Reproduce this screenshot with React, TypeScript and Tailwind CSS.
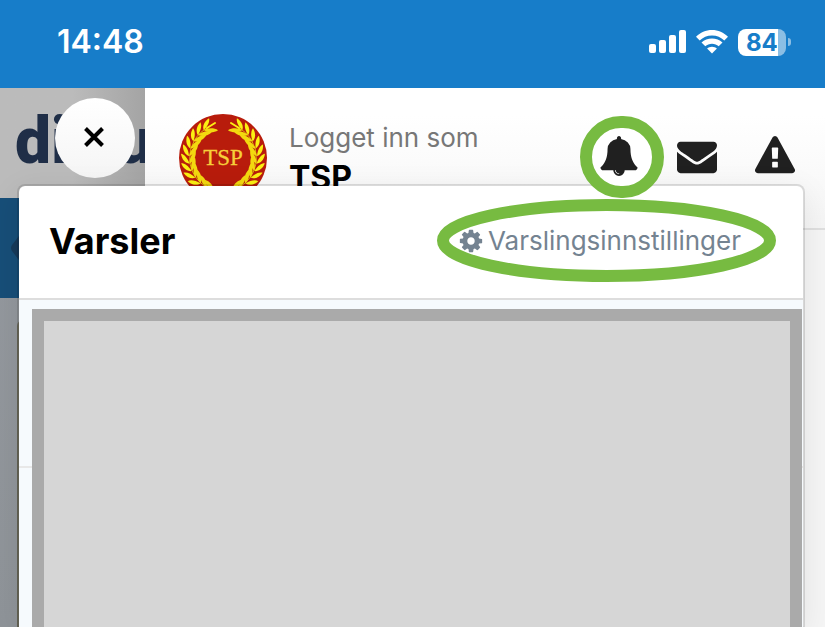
import React from 'react';

const icons = {
  bell: 'M912 1696q0-16-16-16-59 0-101.500-42.500t-42.500-101.500q0-16-16-16t-16 16q0 73 51.500 124.500t124.500 51.500q16 0 16-16zm816-288q0 52-38 90t-90 38h-448q0 106-75 181t-181 75-181-75-75-181h-448q-52 0-90-38t-38-90q50-42 91-88t85-119.500 74.500-158.500 50-206 19.500-260q0-152 117-282.500t307-158.500q-8-19-8-39 0-40 28-68t68-28 68 28 28 68q0 20-8 39 190 28 307 158.500t117 282.500q0 139 19.500 260t50 206 74.500 158.500 85 119.500 91 88z',
  envelope: 'M1792 710v794q0 66-47 113t-113 47h-1472q-66 0-113-47t-47-113v-794q44 49 101 87 362 246 497 345 57 42 92.500 65.500t94.500 48 110 24.500h2q51 0 110-24.500t94.500-48 92.500-65.500q170-123 498-345 57-39 100-87zm0-294q0 79-49 151t-122 123q-376 261-468 325-10 7-42.500 31t-54 38.500-52 32.500-57.500 27-50 9h-2q-23 0-50-9t-57.500-27-52-32.500-54-38.500-42.500-31q-91-64-262-182.500t-205-142.500q-62-42-117-115.500t-55-136.500q0-78 41.500-130t118.500-52h1472q65 0 112.500 47t47.500 113z',
  warning: 'M1024 1375v-190q0-14-9.500-23.500t-22.500-9.500h-192q-13 0-22.500 9.500t-9.500 23.500v190q0 14 9.500 23.500t22.500 9.500h192q13 0 22.500-9.500t9.500-23.500zm-2-374l18-459q0-12-10-19-13-11-24-11h-220q-11 0-24 11-10 7-10 21l17 457q0 10 10 16.500t24 6.500h185q14 0 23.500-6.500t10.500-16.500zm-14-934l768 1408q35 63-2 126-17 29-46.500 46t-63.500 17h-1536q-34 0-63.500-17t-46.500-46q-37-63-2-126l768-1408q17-31 47-49t65-18 65 18 47 49z',
  cog: 'M1152 896q0-106-75-181t-181-75-181 75-75 181 75 181 181 75 181-75 75-181zm512-109v222q0 12-8 23t-20 13l-185 28q-19 54-39 91 35 50 107 138 10 12 10 25t-9 23q-27 37-99 108t-94 71q-12 0-26-9l-138-108q-44 23-91 38-16 136-29 186-7 28-36 28h-222q-14 0-24.500-8.500t-11.500-21.500l-28-184q-49-16-90-37l-141 107q-10 9-25 9-14 0-25-11-126-114-165-168-7-10-7-23 0-12 8-23 15-21 51-66.500t54-70.500q-27-50-41-99l-183-27q-13-2-21-12.500t-8-23.500v-222q0-12 8-23t19-13l186-28q14-46 39-92-40-57-107-138-10-12-10-24 0-10 9-23 26-36 98.500-107.500t94.500-71.500q13 0 26 10l138 107q44-23 91-38 16-136 29-186 7-28 36-28h222q14 0 24.500 8.500t11.500 21.500l28 184q49 16 90 37l142-107q9-9 24-9 13 0 25 10 129 119 165 170 7 8 7 22 0 12-8 23-15 21-51 66.500t-54 70.500q26 50 41 98l183 28q13 2 21 12.500t8 23.500z',
};

const Icon: React.FC<{ name: keyof typeof icons; className: string }> = ({ name, className }) => (
  <svg viewBox="0 0 1792 1792" fill="currentColor" className={className} aria-hidden="true">
    <path d={icons[name]} />
  </svg>
);

const leafAngles = [33, 46, 59, 72, 85, 98, 111, 124, 137, 150, 163];

const Branch: React.FC = () => (
  <g>
    <path d="M58 13A34 34 0 0 1 54 76" stroke="#d9b010" strokeWidth="1" fill="none" />
    {leafAngles.map(angle => (
      <g key={angle} transform={`rotate(${angle} 44 44) translate(44 10)`}>
        <path d="M1 0C0 -4 -4 -7 -10 -7C-9 -4 -5 -1 1 0Z" fill="#fbf012" />
        <path d="M1 0C-2 0 -9 3 -11 8C-6 8 -1 5 1 0Z" fill="#f3d90f" />
      </g>
    ))}
    <path d="M60 14L52 9" stroke="#fbf012" strokeWidth="2" strokeLinecap="round" fill="none" />
  </g>
);

const Avatar: React.FC = () => (
  <svg viewBox="0 0 88 88" className="h-[88px] w-[88px] shrink-0" role="img" aria-label="TSP">
    <circle cx="44" cy="44" r="44" fill="#b81c0c" />
    <Branch />
    <g transform="translate(88 0) scale(-1 1)">
      <Branch />
    </g>
    <text x="44" y="51" textAnchor="middle" fontSize="23" fontFamily="Liberation Serif, serif" fill="#f6cf3a" stroke="#f6cf3a" strokeWidth="0.3">
      TSP
    </text>
  </svg>
);

const StatusBar: React.FC = () => (
  <div className="flex h-[88px] items-center justify-between bg-[#177dc9] pr-[34px] pb-1 pl-[57px] text-white">
    <span className="text-[32px] leading-10 font-semibold">14:48</span>
    <div className="flex items-center gap-[10px]">
      <svg viewBox="0 0 37 24" className="h-6 w-[37px]" fill="currentColor" aria-hidden="true">
        <rect x="0" y="14" width="7" height="9" rx="2" />
        <rect x="10" y="10" width="7" height="13" rx="2" />
        <rect x="20" y="5" width="7" height="18" rx="2" />
        <rect x="30" y="0" width="7" height="23" rx="2" />
      </svg>
      <svg viewBox="0 0 32 24" className="h-6 w-8" fill="currentColor" aria-hidden="true">
        <path d="M16 0C9.800 0 4.200 2.600 0 6.700L3.700 10.500C6.900 7.400 11.200 5.500 16 5.500S25.100 7.400 28.300 10.500L32 6.700C27.800 2.600 22.200 0 16 0Z" />
        <path d="M16 8.400C12 8.400 8.300 9.900 5.500 12.500L9.300 16.300C11.100 14.700 13.400 13.800 16 13.800S20.900 14.700 22.700 16.300L26.500 12.500C23.700 9.900 20 8.400 16 8.400Z" />
        <path d="M16 16.800C14.100 16.800 12.400 17.500 11.100 18.600L16 23.600L20.900 18.600C19.600 17.500 17.900 16.800 16 16.800Z" />
      </svg>
      <div className="flex items-center gap-[2px]">
        <div className="flex h-[27px] w-12 items-center rounded-lg bg-linear-to-r from-white from-84% to-[#8bbee4] to-84% pl-2">
          <span className="text-[24px] leading-[27px] font-bold text-[#177dc9]">84</span>
        </div>
        <span className="h-2 w-[3px] rounded-r-full bg-[#8bbee4]" />
      </div>
    </div>
  </div>
);

const Sidebar: React.FC = () => (
  <aside className="flex w-[145px] shrink-0 flex-col bg-linear-to-b from-[#969aa0] to-[#8f9499]">
    <div className="h-[110px] overflow-hidden bg-linear-to-r from-[#bbbbbb] from-50% to-[#a4a4a4] pt-[18px] pl-[15px]">
      <div className="flex gap-12 font-[Roboto,sans-serif] text-[64px] leading-[72px] font-black text-[#1f2e47]">
        <span>di</span>
        <span>u</span>
      </div>
    </div>
    <div className="flex h-[100px] items-center bg-[#174e78] pl-[11px]">
      <svg viewBox="0 0 18 32" className="h-8 w-[18px]" aria-hidden="true">
        <path d="M18 0H11L1 13Q-1 16 1 19L11 32H18Z" fill="#173a5a" />
      </svg>
    </div>
    <div className="mt-[22px] ml-[17px] flex-1 rounded-tl-md bg-[#6f6e5f]" />
  </aside>
);

const Header: React.FC = () => (
  <header className="flex h-[142px] items-start justify-between border-b-2 border-[#dfdfdf] bg-linear-to-b from-white from-20% to-[#f5f5f5] pt-[26px] pr-[30px] pl-[34px]">
    <div className="flex gap-[22px]">
      <Avatar />
      <div className="pt-1">
        <div className="text-[26px] leading-10 text-[#777777]">Logget inn som</div>
        <div className="text-[32px] leading-10 font-bold text-black">TSP</div>
      </div>
    </div>
    <nav className="flex h-[84px] items-center gap-[38px] text-[#202020]">
      <button type="button" aria-label="Varsler" className="relative z-20">
        <span className="absolute -top-5 -left-[19px] h-[82px] w-[84px] rounded-full border-12 border-[#77bb41] bg-white" />
        <Icon name="bell" className="relative h-10 w-10" />
      </button>
      <button type="button" aria-label="Meldinger">
        <Icon name="envelope" className="h-10 w-10" />
      </button>
      <button type="button" aria-label="Advarsler">
        <Icon name="warning" className="h-10 w-10" />
      </button>
    </nav>
  </header>
);

const NotificationPanel: React.FC = () => (
  <section className="absolute top-24 right-5 bottom-0 left-[17px] z-10 flex flex-col rounded-t-lg border-2 border-b-0 border-black/12 bg-white bg-clip-padding shadow-[0_8px_32px_rgba(0,0,0,0.08)]">
    <div className="flex h-[114px] items-center justify-between border-b-2 border-[#dddddd] pr-[62px] pb-[2px] pl-[30px]">
      <h1 className="text-[36px] leading-10 font-bold text-black">Varsler</h1>
      <a href="#innstillinger" className="relative flex items-center gap-1 text-[26px] leading-10 text-[#748391]">
        <svg viewBox="0 0 339 83" className="absolute -top-[22px] -left-[21px] h-[83px] w-[339px]" aria-hidden="true">
          <ellipse cx="169.500" cy="41.500" rx="163.500" ry="35.500" fill="none" stroke="#77bb41" strokeWidth="12" />
        </svg>
        <Icon name="cog" className="h-[26px] w-[26px]" />
        Varslingsinnstillinger
      </a>
    </div>
    <div className="flex flex-1 bg-[#f6fafd] bg-[linear-gradient(#e8e8e8,#e8e8e8)] bg-[length:100%_2px] bg-[position:0_166px] bg-no-repeat pt-[9px] pr-px pl-[13px]">
      <div className="flex-1 border-12 border-b-0 border-[#aaaaaa] bg-[#d6d6d6]" />
    </div>
  </section>
);

export default function App() {
  return (
    <div className="flex min-h-screen flex-col font-[Inter,sans-serif]">
      <StatusBar />
      <main className="relative flex flex-1 bg-[#f5f5f5]">
        <Sidebar />
        <div className="min-w-0 flex-1">
          <Header />
        </div>
        <button
          type="button"
          aria-label="Lukk"
          className="absolute top-[10px] left-[55px] flex h-20 w-20 items-center justify-center rounded-full bg-linear-to-b from-white to-[#f5f5f5] pr-[2px] pb-[2px] text-black"
        >
          <svg viewBox="0 0 20 20" className="h-5 w-5" stroke="currentColor" strokeWidth="4" aria-hidden="true">
            <path d="M1.500 1.500L18.500 18.500M18.500 1.500L1.500 18.500" />
          </svg>
        </button>
        <NotificationPanel />
      </main>
    </div>
  );
}
